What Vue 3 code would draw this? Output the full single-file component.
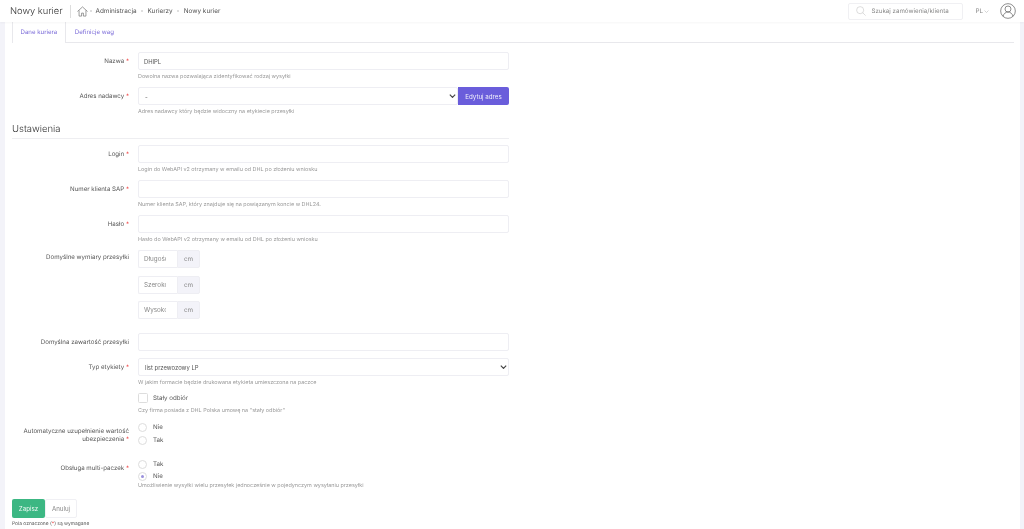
<template>
  <div class="page">
    <header class="topbar">
      <div class="title">Nowy kurier</div>
      <div class="sep"></div>
      <svg class="home" viewBox="0 0 24 24" width="11" height="11" fill="none" stroke="#666" stroke-width="1.400"><path d="M1 12 12 2l11 10M4.500 9.500V22h5.500v-6.500h4V22h5.500V9.500"/></svg>
      <nav class="crumbs">
        <span class="dot lead"></span><span>Administracja</span><span class="dot"></span><span>Kurierzy</span><span class="dot"></span><span>Nowy kurier</span>
      </nav>
      <div class="search">
        <svg viewBox="0 0 24 24" width="10" height="10" fill="none" stroke="#c4c4c4" stroke-width="1.400"><circle cx="10" cy="10" r="8.500"/><path d="m16 16 7 7"/></svg>
        <span>Szukaj zamówienia/klienta</span>
      </div>
      <div class="lang">PL<svg viewBox="0 0 10 6" width="5" height="3" fill="none" stroke="#aaa"><path d="m1 1 4 4 4-4"/></svg></div>
      <svg class="user" viewBox="0 0 24 24" width="16" height="16" fill="none" stroke="#555" stroke-width="1"><circle cx="12" cy="12" r="11"/><circle cx="12" cy="9" r="4.500"/><path d="M4.500 20c1-4 4-6.500 7.500-6.500s6.500 2.500 7.500 6.500"/></svg>
    </header>
    <main class="content">
      <div class="tabs">
        <div class="tab active">Dane kuriera</div>
        <div class="tab">Definicje wag</div>
      </div>
      <div class="row first">
        <label>Nazwa <i>*</i></label>
        <div class="field"><input class="ctl" value="DHlPL"><p class="help">Dowolna nazwa pozwalająca zidentyfikować rodzaj wysyłki</p></div>
      </div>
      <div class="row">
        <label>Adres nadawcy <i>*</i></label>
        <div class="field">
          <div class="joined">
            <div class="sel grow"><select class="ctl"><option>-</option></select><svg class="arrow" viewBox="0 0 10 6" width="7" height="4" fill="none" stroke="#444" stroke-width="1.800"><path d="m1 1 4 4 4-4"/></svg></div>
            <button class="edit">Edytuj adres</button>
          </div>
          <p class="help">Adres nadawcy który będzie widoczny na etykiecie przesyłki</p>
        </div>
      </div>
      <h2>Ustawienia</h2>
      <div class="row">
        <label>Login <i>*</i></label>
        <div class="field"><input class="ctl"><p class="help">Login do WebAPI v2 otrzymany w emailu od DHL po złożeniu wniosku</p></div>
      </div>
      <div class="row">
        <label>Numer klienta SAP <i>*</i></label>
        <div class="field"><input class="ctl"><p class="help">Numer klienta SAP, który znajduje się na powiązanym koncie w DHL24.</p></div>
      </div>
      <div class="row">
        <label>Hasło <i>*</i></label>
        <div class="field"><input class="ctl"><p class="help">Hasło do WebAPI v2 otrzymany w emailu od DHL po złożeniu wniosku</p></div>
      </div>
      <div class="row dims">
        <label>Domyślne wymiary przesyłki</label>
        <div class="field">
          <div v-for="d in ['Długość','Szerokość','Wysokość']" :key="d" class="unit">
            <input class="unit-in" :placeholder="d"><span>cm</span>
          </div>
        </div>
      </div>
      <div class="row plain">
        <label>Domyślna zawartość przesyłki</label>
        <div class="field"><input class="ctl"></div>
      </div>
      <div class="row">
        <label>Typ etykiety <i>*</i></label>
        <div class="field">
          <div class="sel"><select class="ctl"><option>list przewozowy LP</option></select><svg class="arrow" viewBox="0 0 10 6" width="7" height="4" fill="none" stroke="#444" stroke-width="1.800"><path d="m1 1 4 4 4-4"/></svg></div>
          <p class="help">W jakim formacie będzie drukowana etykieta umieszczona na paczce</p>
        </div>
      </div>
      <div class="row check-row">
        <label></label>
        <div class="field">
          <div class="opt"><span class="box"></span>Stały odbiór</div>
          <p class="help gap">Czy firma posiada z DHL Polska umowę na "stały odbiór"</p>
        </div>
      </div>
      <div class="row radio-row">
        <label>Automatyczne uzupełnienie wartość ubezpieczenia <i>*</i></label>
        <div class="field">
          <div class="opt"><span class="radio"></span>Nie</div>
          <div class="opt"><span class="radio"></span>Tak</div>
        </div>
      </div>
      <div class="row radio-row multi">
        <label>Obsługa multi-paczek <i>*</i></label>
        <div class="field">
          <div class="opt"><span class="radio"></span>Tak</div>
          <div class="opt"><span class="radio on"></span>Nie</div>
          <p class="help wide">Umożliwienie wysyłki wielu przesyłek jednocześnie w pojedynczym wysyłaniu przesyłki</p>
        </div>
      </div>
      <div class="actions"><button class="save">Zapisz</button><button class="cancel">Anuluj</button></div>
      <p class="note">Pola oznaczone (<i>*</i>) są wymagane</p>
    </main>
  </div>
</template>

<script setup>
</script>

<style>
html, body { margin: 0; background: #fff; overflow: hidden; }
</style>

<style scoped>
.page { height: 529px; overflow: hidden; font-family: Inter, "Noto Sans", sans-serif; color: #666; background: #f3f3f9; text-rendering: geometricPrecision; filter: blur(.3px); }
.topbar { height: 22px; background: #fff; display: flex; align-items: center; padding: 0 8px 0 10px; position: relative; z-index: 1; box-shadow: 0 1px 2px rgba(0,0,0,.04); }
.title { font-size: 9.300px; font-weight: 300; color: #333; white-space: nowrap; }
.sep { width: 1px; height: 13px; background: #ddd; margin: 0 6px 0 7px; }
.crumbs { display: flex; align-items: center; font-size: 6.400px; color: #555; }
.dot { width: 2px; height: 2px; border-radius: 50%; background: #d4d4d4; margin: 0 4.500px; }
.dot.lead { margin: 0 4px 0 2px; }
.search { margin-left: auto; width: 115px; height: 17px; box-sizing: border-box; border: 1px solid #f0f0f3; border-radius: 2px; display: flex; align-items: center; gap: 5px; padding-left: 7px; font-size: 6.200px; color: #888; }
.lang { display: flex; align-items: center; gap: 1px; font-size: 6.300px; color: #888; margin: 0 11px 0 12px; }
.content { margin: 0 4px 0 5px; height: 507px; background: #fff; padding: 0 0 0 7px; overflow: hidden; }
.tabs { display: flex; height: 20px; border-bottom: 1px solid #e8e8ec; margin-right: 6px; }
.tab { font-size: 6.100px; color: #7a6ad8; padding: 7px 9px 0; height: 13px; white-space: nowrap; }
.tab.active { border: 1px solid #e8e8ec; border-width: 0 1px; height: 14px; background: #fff; margin-bottom: -1px; padding: 7px 7.500px 0; }
.row { display: flex; margin-bottom: 6px; }
.row.first { margin-top: 9px; }
.row.plain { margin-bottom: 7px; }
label { width: 117px; text-align: right; font-size: 6.150px; line-height: 8px; padding-top: 6px; margin-right: 9px; color: #555; }
label i, .note i { color: #e33; font-style: normal; }
.field { width: 371px; }
.sel { position: relative; }
.arrow { position: absolute; right: 2px; top: 7px; }
.ctl { display: block; width: 100%; height: 18px; box-sizing: border-box; border: 1px solid #eeeef3; border-radius: 2px; background: #fff; padding: 0 5px; font: 5.900px Inter, sans-serif; color: #555; outline: none; }
select.ctl { appearance: none; padding: 0 6px; }
.joined { display: flex; }
.grow { flex: 1; min-width: 0; }
.edit { width: 51px; height: 18px; border: 0; background: #6a5ddb; color: #f2f0fc; font: 6.200px Inter, sans-serif; border-radius: 0 2px 2px 0; padding: 0; }
.help { margin: 4px 0 0; font-size: 5.450px; line-height: 7px; color: #999; white-space: nowrap; }
.help.gap { margin-top: 5px; }
h2 { font-weight: 300; font-size: 9.500px; line-height: 12px; color: #333; margin: 0 0 6.500px; padding: 1.500px 0 2px; width: 497px; border-bottom: 1px solid #eeeef1; }
.dims { margin-bottom: 14px; }
.dims label { padding-top: 4px; }
.unit { display: flex; width: 62px; height: 18px; margin-bottom: 7.500px; }
.unit:last-child { margin-bottom: 0; }
.unit-in { width: 39px; box-sizing: border-box; border: 1px solid #eeeef3; border-right: 0; border-radius: 2px 0 0 2px; padding: 0 11px 0 5px; font: 6.300px Inter, sans-serif; outline: none; }
.unit-in::placeholder { color: #888; }
.unit span { flex: 1; background: #f3f3f9; border: 1px solid #eeeef3; border-radius: 0 2px 2px 0; font-size: 6.300px; color: #888; display: flex; align-items: center; justify-content: center; }
.check-row { margin-bottom: 7.500px; }
.opt { display: flex; align-items: center; height: 10px; font-size: 6.200px; color: #555; margin-bottom: 2.500px; white-space: nowrap; }
.box { width: 8px; height: 8px; border: 1px solid #ddd; border-radius: 1.500px; margin-right: 5px; }
.radio { width: 7px; height: 7px; border: 1px solid #ddd; border-radius: 50%; margin-right: 6px; display: flex; align-items: center; justify-content: center; }
.radio.on::after { content: ""; width: 3px; height: 3px; border-radius: 50%; background: #9a90dc; }
.radio-row { margin-bottom: 11.500px; }
.radio-row label { padding-top: 5px; }
.multi label { padding-top: 5.500px; }
.multi { margin-bottom: 8.500px; }
.help.wide { margin-top: -1px; }
.actions { display: flex; }
.save { width: 33px; height: 19px; border: 0; border-radius: 2px; background: #3cb783; color: #f0faf6; font: 6.200px Inter, sans-serif; padding: 0; }
.cancel { width: 32px; height: 19px; border: 1px solid #f0f0f4; border-radius: 2px; background: #fff; color: #888; font: 6.200px Inter, sans-serif; padding: 0; }
.note { margin: 3.500px 0 0; font-size: 4.900px; line-height: 7px; color: #555; white-space: nowrap; }
</style>
